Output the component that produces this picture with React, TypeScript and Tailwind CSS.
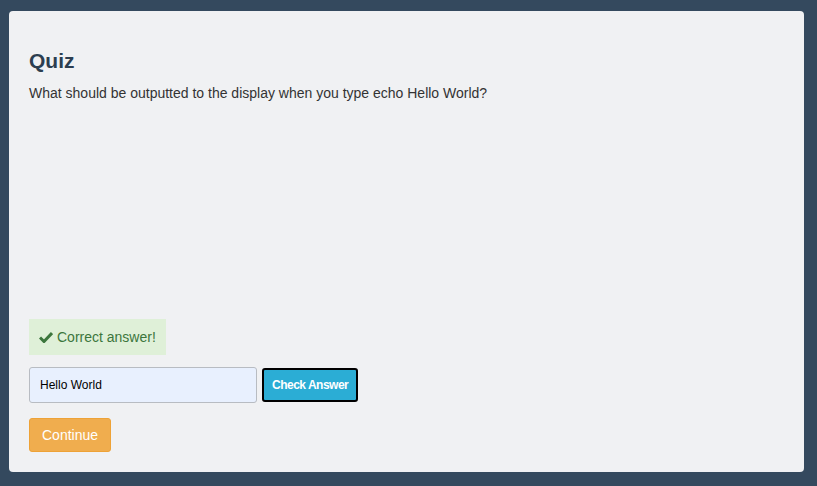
import React from 'react';

const App: React.FC = () => {
  return (
    <div className="w-[817px] h-[486px] bg-[#34495e] pt-[11px] pl-[9px] font-['Liberation_Sans',Arial,sans-serif]">
      <div className="w-[795px] h-[461px] bg-[#f0f1f3] rounded px-5 pb-5 flex flex-col">
        <h2 className="mt-[38px] text-[21px] leading-[24px] font-bold text-[#2c3e50]">Quiz</h2>
        <p className="mt-[10px] text-[14px] leading-5 text-[#333]">What should be outputted to the display when you type echo Hello World?</p>
        <div className="flex-1" />
        <div className="self-start h-9 flex items-center gap-1 px-[10px] bg-[#dff0d8] text-[#3c763d] text-[14px]">
          <svg width="14" height="12" viewBox="0 0 14 12" className="shrink-0">
            <path d="M1 6.5 L5 10.5 L13 2" fill="none" stroke="#3c763d" strokeWidth="3" strokeLinejoin="miter" />
          </svg>
          <span>Correct answer!</span>
        </div>
        <div className="mt-3 flex items-center gap-[5px]">
          <input
            readOnly
            value="Hello World"
            className="w-[228px] h-9 px-[10px] bg-[#e8f0fe] border border-[#b8bcc2] rounded-[3px] text-[12px] text-black outline-none"
          />
          <button className="h-[34px] px-[8px] bg-[#2badd5] border-2 border-black rounded-[3px] text-white text-[12px] font-bold tracking-[-0.5px]">Check Answer</button>
        </div>
        <button className="mt-[15px] self-start h-[34px] px-3 bg-[#f0ad4e] border border-[#eea236] rounded-[3px] text-white text-[14px]">Continue</button>
      </div>
    </div>
  );
};

export default App;
